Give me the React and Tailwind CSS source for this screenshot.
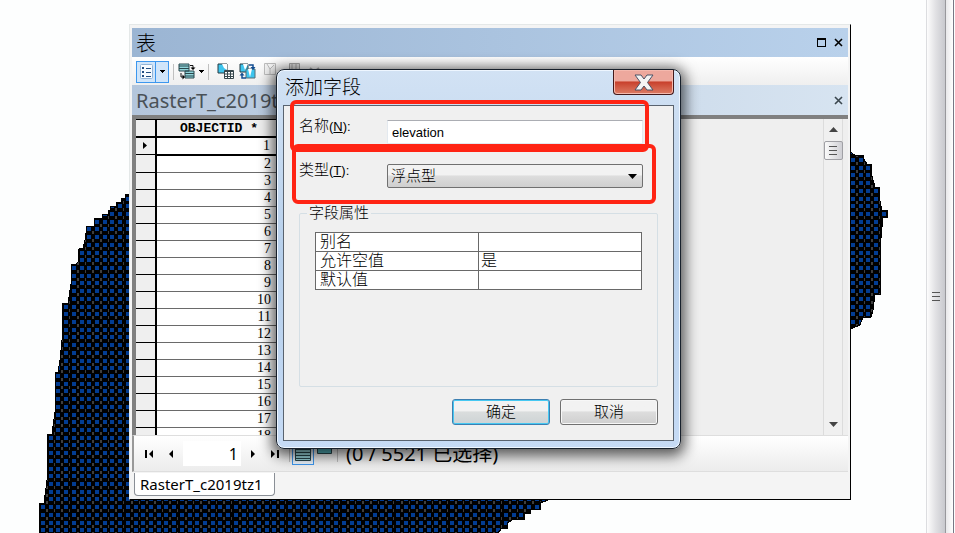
//App.jsx
import React, { useState } from "react";

const rows = Array.from({ length: 18 }, (_, i) => i + 1);

const attributes = [
  { name: "别名", value: "" },
  { name: "允许空值", value: "是" },
  { name: "默认值", value: "" },
];

// seven raster cells fit in one 54px tile
const cells = [0, 8, 15, 23, 31, 39, 46];

export default function App() {
  return (
    <div className="flex min-h-screen overflow-hidden bg-[#fdfefe] font-['Noto_Sans','Noto_Sans_CJK_SC',sans-serif] text-black">
      <main className="relative flex-1">
        <RasterPoints />
        <TableWindow />
        <AddFieldDialog />
        {/* highlight marks */}
        <div className="absolute left-[290px] top-[100px] h-[52px] w-[359px] rounded-md border-4 border-[#ff2414]" />
        <div className="absolute left-[292px] top-[144px] h-[60px] w-[364px] rounded-md border-4 border-[#ff2414]" />
      </main>
      <SplitBar />
    </div>
  );
}

function RasterPoints() {
  return (
    <svg className="absolute left-0 top-0" width="926" height="533" shapeRendering="crispEdges" aria-hidden="true">
      <defs>
        <pattern id="points" x="41" y="158" width="54" height="54" patternUnits="userSpaceOnUse">
          <rect width="54" height="54" fill="#000" />
          {cells.map((y) =>
            cells.map((x, i) => (
              <g key={`${x}-${y}`}>
                <rect x={x} y={y} width="4" height="4" fill="#023c92" />
                <rect x={x + 5} y={y + 4} width={i % 2 ? 1 : 2} height="3" fill="#3e3e3e" />
              </g>
            ))
          )}
        </pattern>
      </defs>
      <path
        fill="url(#points)"
        stroke="#000"
        d="M132 192H129V194H125V198H121V202H116V206H110V210H108V214H102V218H94V226H86V233H85V240L83 248H79V249H78V262L76 264H71V284L68 303H62V340L60 360L58 372H55V412L52 434H47V480L44 503H39V534H497L502 528H507V523L514 519H524V513H530V509H540V503L551 499V400H132Z"
      />
      <path
        fill="url(#points)"
        stroke="#000"
        d="M850 152L855 155H863V158L867 164H871V172L875 187H879V197L882 210H887V217H883L880 248V294H875L873 310L871 317H863L860 325L850 329Z"
      />
    </svg>
  );
}

function SplitBar() {
  return (
    <aside className="flex w-[29px] shrink-0">
      <div className="flex w-5 items-center justify-end border-l border-[#dcdde0] border-r border-r-[#98989c] bg-linear-to-r from-[#fdfdfd] via-[#e0e0e3] to-[#c8c9ce] pr-[5px]">
        <div className="mt-[60px] flex flex-col gap-[3px]">
          <span className="h-px w-2 bg-[#555]" />
          <span className="h-px w-2 bg-[#555]" />
          <span className="h-px w-2 bg-[#555]" />
        </div>
      </div>
      <div className="w-2 border-r border-[#777785] bg-linear-to-r from-[#e8e8ea] to-white" />
    </aside>
  );
}

function CloseGlyph({ color }) {
  return (
    <svg width="9" height="9" viewBox="0 0 9 9">
      <path d="M1 1L8 8M8 1L1 8" stroke={color} strokeWidth="1.6" />
    </svg>
  );
}

function Caret() {
  return (
    <svg width="5" height="3" viewBox="0 0 5 3" shapeRendering="crispEdges">
      <path d="M0 0H5L2.5 3Z" />
    </svg>
  );
}

function Divider() {
  return <span className="h-4 w-px bg-[#c0c0c0]" />;
}

function TableWindow() {
  return (
    <section className="absolute left-[129px] top-6 flex h-[476px] w-[722px] flex-col border border-[#e4e8e8] border-b-black border-r-black bg-[#f4f4f4] px-0.5 pt-[3px]">
      <header className="flex h-[29px] shrink-0 items-center bg-linear-to-r from-[#9bb5d3] to-[#b9d1eb] pl-1 pr-[5px]">
        <h1 className="flex-1 pt-0.5 text-xl leading-7 font-light">表</h1>
        <button aria-label="Maximize" className="mr-2">
          <svg width="9" height="9" viewBox="0 0 9 9" shapeRendering="crispEdges">
            <path d="M0 0H9V9H0ZM1 2V8H8V2Z" fillRule="evenodd" />
          </svg>
        </button>
        <button aria-label="Close">
          <CloseGlyph color="#000" />
        </button>
      </header>

      <Toolbar />

      <div className="flex h-[30px] shrink-0 items-center bg-linear-to-r from-[#b4c6dc] to-[#d7e4f1] pl-1 pr-[5px]">
        <h2 className="flex-1 pt-0.5 text-xl text-[#4a5157]">RasterT_c2019tz1</h2>
        <button aria-label="Close table">
          <CloseGlyph color="#3b474e" />
        </button>
      </div>

      <div className="flex min-h-0 flex-1 border-l-4 border-t-4 border-[#808080] bg-[#efefef]">
        <div className="flex-1 overflow-hidden">
          <table className="w-[180px] table-fixed border-collapse bg-white font-['Liberation_Serif',serif] text-sm leading-4">
            <thead>
              <tr className="h-[17px] border-b-2 border-black bg-[#efefef]">
                <th className="w-5 border-r-2 border-t border-black p-0" />
                <th className="border-t border-black p-0 pr-[57px] pt-0.5 text-right font-['Liberation_Mono',monospace] text-[13px] leading-3 font-bold">
                  OBJECTID *
                </th>
              </tr>
            </thead>
            <tbody>
              {rows.map((id) => (
                <tr key={id} className="h-[17px]">
                  <td className="border-b border-r-2 border-black bg-[#efefef] p-0">
                    {id === 1 && (
                      <svg className="mx-auto" width="5" height="7" viewBox="0 0 5 7">
                        <path d="M0 0L4 3.5L0 7Z" />
                      </svg>
                    )}
                  </td>
                  <td
                    className={
                      id === 1
                        ? "border-2 border-black p-0 pr-11 text-right"
                        : "border-b border-[#6a6a6a] p-0 pr-11 text-right"
                    }
                  >
                    {id}
                  </td>
                </tr>
              ))}
            </tbody>
          </table>
        </div>
        <div className="mr-[5px] flex w-5 flex-col items-center border-x border-x-[#dcdcdc] bg-[#f0f0f0] py-2">
          <svg width="9" height="5" viewBox="0 0 9 5">
            <path d="M0 5L4.5 0L9 5Z" fill="#444" />
          </svg>
          <button aria-label="Scroll" className="mt-[9px] flex h-[19px] w-[19px] shrink-0 flex-col items-center justify-center gap-[3px] rounded-xs border border-[#a0a0a5] bg-linear-to-r from-[#fafafa] to-[#d0d0d5]">
            <span className="h-px w-2 bg-[#555]" />
            <span className="h-px w-2 bg-[#555]" />
            <span className="h-px w-2 bg-[#555]" />
          </button>
          <svg className="mt-auto" width="9" height="5" viewBox="0 0 9 5">
            <path d="M0 0L4.5 5L9 0Z" fill="#444" />
          </svg>
        </div>
      </div>

      <RecordBar />

      <div className="h-[27px] shrink-0 pl-0.5">
        <button className="h-[23px] w-[141px] rounded-b-sm border border-t-0 border-[#8a8f96] bg-white px-[5px] text-left text-[15px] leading-5">
          RasterT_c2019tz1
        </button>
      </div>
    </section>
  );
}

function Toolbar() {
  return (
    <div className="flex h-7 shrink-0 items-center gap-1 bg-linear-to-b from-white to-[#efefef] pl-1 pt-px">
      <button aria-label="Table options" className="flex h-[22px] w-[33px] items-center border border-[#3d97ee] bg-[#d0e5fa]">
        <span className="flex h-full flex-1 items-center justify-center border-r border-[#3d97ee]">
          <svg width="13" height="15" viewBox="0 0 13 15">
            <rect x=".5" y=".5" width="12" height="14" rx="1" fill="#f7fbff" stroke="#92b4d8" />
            <path d="M2 3h2v2H2zM2 7h2v2H2zM2 11h2v2H2zM6 4h5v1H6zM6 8h5v1H6zM6 12h5v1H6z" fill="#234f83" />
          </svg>
        </span>
        <span className="flex w-3 justify-center">
          <Caret />
        </span>
      </button>
      <Divider />
      <button aria-label="Related tables" className="flex items-center gap-[3px]">
        <svg width="18" height="17" viewBox="0 0 18 17">
          <path d="M1 1h10v7H1zM7 8h9v7H7z" fill="#8fd4da" stroke="#29474c" />
          <path d="M1 3h10M1 5.5h10M7 10.5h9M7 13h9" stroke="#29474c" />
          <path d="M12 2.500h3v3M3 10v4h3" fill="none" stroke="#111" />
          <path d="M12.500 4.500h5L15 7zM4.500 11.500v5L7 14z" />
        </svg>
        <Caret />
      </button>
      <Divider />
      <span />
      <button aria-label="Select by attributes">
        <svg width="17" height="17" viewBox="0 0 17 17">
          <path d="M1 1h9v9H1z" fill="#3ec5ee" stroke="#263b42" />
          <path d="M5 1h5v6L7 5z" fill="#fff" />
          <path d="M7.5 7.5h9v8h-9z" fill="#fff" stroke="#37474d" />
          <path d="M7 8.5h10M7 11h10M7 13.5h10M10.5 8v8M13.5 8v8" stroke="#37474d" />
        </svg>
      </button>
      <button aria-label="Switch selection" className="ml-px">
        <svg width="17" height="17" viewBox="0 0 17 17">
          <path d="M1 1h8v8H1z" fill="#3ec5ee" stroke="#263b42" />
          <path d="M7 6h9v9H7z" fill="#3ec5ee" stroke="#526d77" />
          <path d="M4 1h5L6 7zM9 6h4l-2 8z" fill="#fff" />
          <path d="M10 2h4v3M3 11v4h4" fill="none" stroke="#124c91" strokeWidth="1.5" />
          <path d="M11.500 4h5L14 7zM.5 12.500h5L3 9.500z" fill="#124c91" />
        </svg>
      </button>
      <button disabled aria-label="Clear selection" className="ml-1 mb-1">
        <svg width="13" height="13" viewBox="0 0 13 13" fill="#f3f3f3" stroke="#bdbdbd">
          <path d="M.5.5h11v11H.5zM3 1l3 5 4-4M6 6v5" />
        </svg>
      </button>
      <button disabled aria-label="Zoom to selected" className="ml-2 mb-1">
        <svg width="12" height="13" viewBox="0 0 12 13" fill="#ddd" stroke="#a4a4a4">
          <path d="M.5.5h10v11H.5zM3 1v11M7 1v11" />
        </svg>
      </button>
      <button disabled aria-label="Delete selected" className="ml-1">
        <svg width="11" height="9" viewBox="0 0 11 9" stroke="#aaa" strokeWidth="2">
          <path d="M1 1L10 8M10 1L1 8" />
        </svg>
      </button>
    </div>
  );
}

function RecordBar() {
  const [record, setRecord] = useState("1");

  return (
    <div className="flex h-[37px] shrink-0 items-center border-b border-l-2 border-t border-b-[#dedede] border-l-[#999] border-t-[#dedede] bg-linear-to-b from-white to-[#ececec] pl-[11px]">
      <button aria-label="First record" className="w-[22px]">
        <svg width="9" height="8" viewBox="0 0 9 8">
          <path d="M0 0H2V8H0ZM8 0V8L4 4Z" />
        </svg>
      </button>
      <button aria-label="Previous record" className="w-4">
        <svg width="9" height="8" viewBox="0 0 9 8">
          <path d="M6 0V8L2 4Z" />
        </svg>
      </button>
      <input
        aria-label="Record"
        value={record}
        onChange={(e) => setRecord(e.target.value)}
        className="h-[25px] w-[58px] bg-white pr-[3px] text-right text-base"
      />
      <button aria-label="Next record" className="w-[30px] pl-2">
        <svg width="9" height="8" viewBox="0 0 9 8">
          <path d="M2 0V8L6 4Z" />
        </svg>
      </button>
      <button aria-label="Last record" className="w-[18px]">
        <svg width="9" height="8" viewBox="0 0 9 8">
          <path d="M0 0V8L4 4ZM6 0H8V8H6Z" />
        </svg>
      </button>
      <Divider />
      <button aria-label="Show all records" className="ml-0.5 flex h-[22px] w-[22px] items-center justify-center border border-[#3d97ee] bg-[#eaf3fc]">
        <svg width="16" height="16" viewBox="0 0 16 16">
          <path d="M.5.5h15v14H.5z" fill="#9bd8de" stroke="#29474c" />
          <path d="M0 3.5h16M0 6.5h16M0 9.5h16M0 12.5h16" stroke="#29474c" />
        </svg>
      </button>
      <button aria-label="Show selected records" className="ml-[3px] mb-2 w-5">
        <svg width="15" height="10" viewBox="0 0 15 10">
          <path d="M.5.5h14v8H.5z" fill="#57b9c4" stroke="#29474c" />
        </svg>
      </button>
      <Divider />
      <span className="pl-2 text-xl leading-8">(0 / 5521 已选择)</span>
    </div>
  );
}

function AddFieldDialog() {
  const [name, setName] = useState("elevation");

  return (
    <form
      onSubmit={(e) => e.preventDefault()}
      className="absolute left-[276px] top-[69px] flex h-[380px] w-[405px] flex-col rounded-lg border border-[#17202b] bg-linear-to-b from-[#d2e2f4] via-[#b6cfeb] to-[#c6dbf5] px-1.5 pb-[7px] font-['Liberation_Sans','Noto_Sans_CJK_SC',sans-serif] shadow-[0_3px_14px_4px_rgba(0,0,0,0.65),inset_0_0_0_1px_#eef6ff]"
    >
      <header className="flex h-[35px] shrink-0 items-start justify-between">
        <h2 className="pl-0.5 pt-1 text-[19px] leading-7 font-light">添加字段</h2>
        <button
          type="button"
          aria-label="Close"
          className="flex h-[25px] w-[61px] items-center justify-center rounded-b-sm border border-t-0 border-[#43191a] bg-linear-to-b from-[#eda89d] from-45% via-[#c8402c] via-50% to-[#dc7b64] shadow-[inset_0_0_0_1px_#f4b9ae]"
        >
          <svg width="20" height="17" viewBox="0 0 20 17">
            <path
              d="M1 1H7L10 5L13 1H19L13.5 8.5L19 16H13L10 12L7 16H1L6.5 8.5Z"
              fill="#f4f4f4"
              stroke="#4b5265"
            />
          </svg>
        </button>
      </header>

      <div className="flex flex-1 flex-col border border-[#59636f] bg-[#f0f0f0] px-[15px] pt-3.5 font-light">
        <div className="flex h-11 shrink-0 items-start">
          <label htmlFor="field-name" className="-mt-0.5 w-[88px] text-[15px] leading-4">
            名称<span className="text-[13px]">(<u>N</u>):</span>
          </label>
          <input
            id="field-name"
            value={name}
            onChange={(e) => setName(e.target.value)}
            className="h-6 flex-1 border border-[#e3e9ef] border-t-[#abadb3] bg-white px-1 text-[13px]"
          />
          <span className="w-[15px]" />
        </div>
        <div className="flex h-[41px] shrink-0 items-start">
          <label htmlFor="field-type" className="-mt-0.5 w-[88px] text-[15px] leading-4">
            类型<span className="text-[13px]">(<u>T</u>):</span>
          </label>
          <div className="relative flex-1">
            <select
              id="field-type"
              defaultValue="float"
              className="h-6 w-full appearance-none rounded-xs border border-[#707070] bg-linear-to-b from-[#f2f2f2] from-45% via-[#dddddd] via-50% to-[#cfcfcf] px-[3px] text-[15px] leading-5"
            >
              <option value="float">浮点型</option>
              <option value="double">双精度</option>
              <option value="text">文本</option>
            </select>
            <svg className="pointer-events-none absolute right-1.5 top-2.5" width="9" height="5" viewBox="0 0 9 5">
              <path d="M0 0H9L4.5 5Z" />
            </svg>
          </div>
          <span className="w-[15px]" />
        </div>

        <fieldset className="h-[182px] shrink-0 rounded-xs border border-[#d5dfe5] px-[15px] pt-[11px]">
          <legend className="-ml-2 px-0.5 text-[15px] leading-4">字段属性</legend>
          <table className="w-full table-fixed border-collapse bg-white text-base leading-4">
            <tbody>
              {attributes.map((attr) => (
                <tr key={attr.name} className="h-[19px]">
                  <th className="border border-[#696969] p-0 pl-1 text-left font-light">{attr.name}</th>
                  <td className="border border-[#696969] p-0 pl-0.5">{attr.value}</td>
                </tr>
              ))}
            </tbody>
          </table>
        </fieldset>

        <div className="flex justify-end gap-2.5 pt-3 text-[15px]">
          <button
            type="submit"
            className="h-[26px] w-[98px] rounded-[3px] border border-[#3c7fb1] bg-linear-to-b from-[#f2f2f2] from-45% via-[#dadddd] via-50% to-[#cdd3d5] leading-5 shadow-[inset_0_0_0_1px_#46c8f2]"
          >
            确定
          </button>
          <button
            type="button"
            className="h-[26px] w-[98px] rounded-[3px] border border-[#707070] bg-linear-to-b from-[#f2f2f2] from-45% via-[#dddddd] via-50% to-[#cfcfcf] leading-5 shadow-[inset_0_0_0_1px_#f7f7f7]"
          >
            取消
          </button>
        </div>
      </div>
    </form>
  );
}
